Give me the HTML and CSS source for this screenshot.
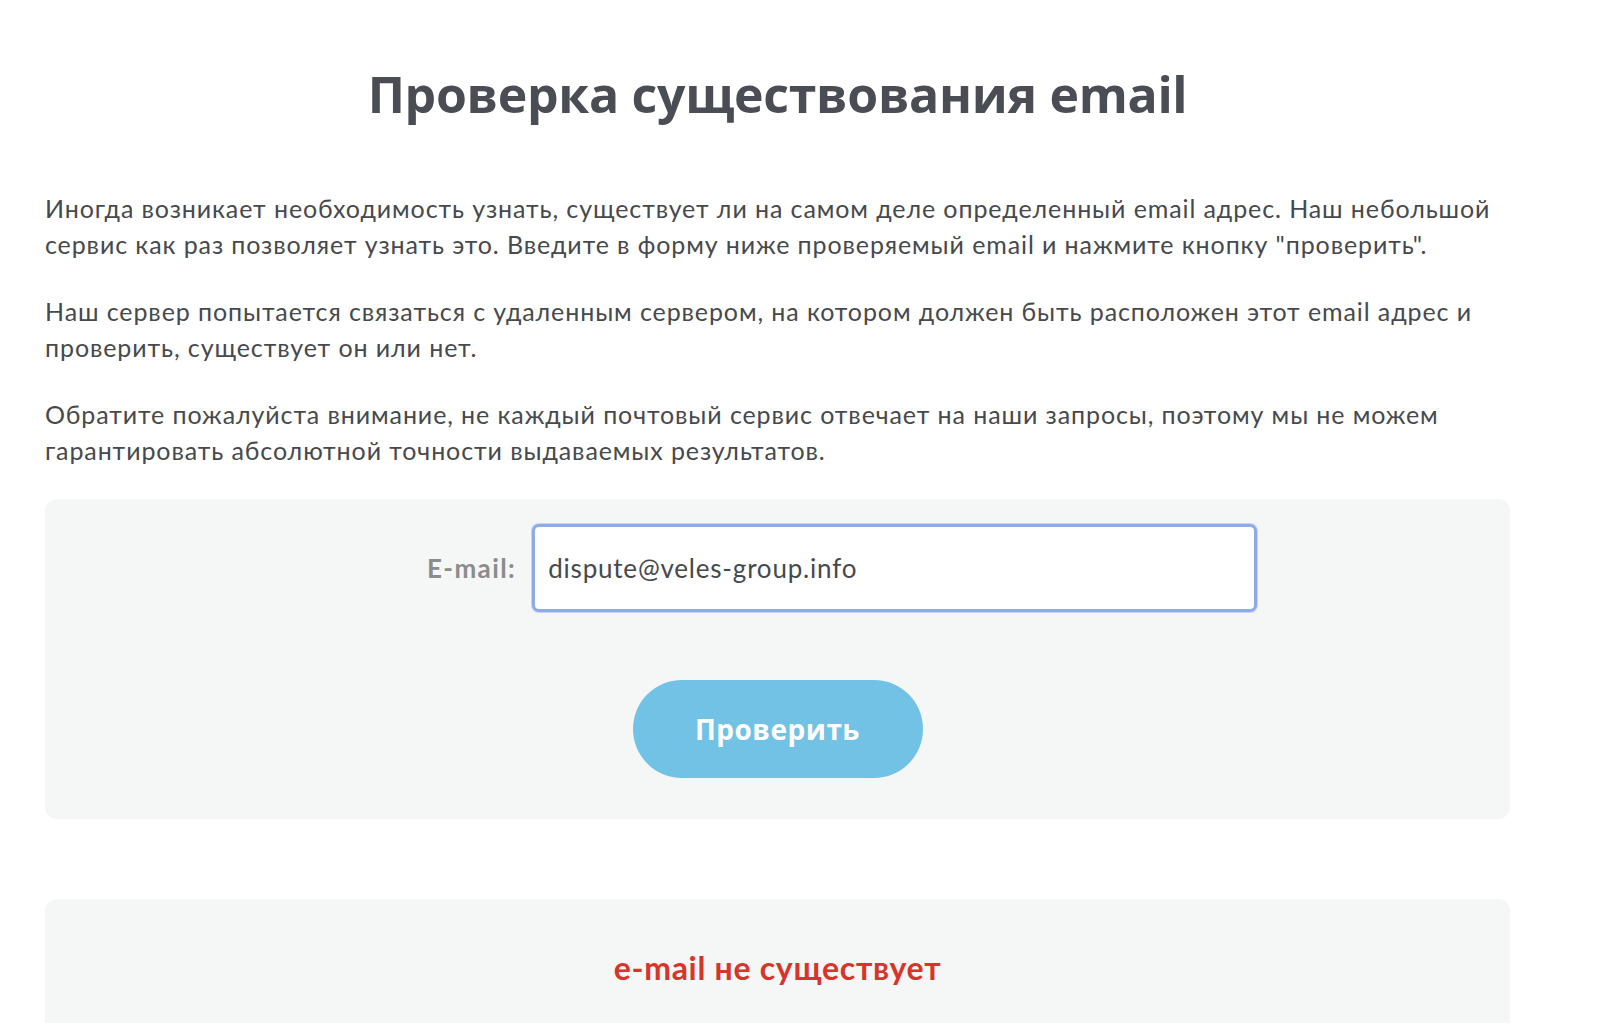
FILE: index.html
```html
<!DOCTYPE html>
<html lang="ru">
<head>
    <meta charset="UTF-8">
    <meta name="viewport" content="width=device-width, initial-scale=1.0">
    <title>Проверка существования email</title>
    <link rel="stylesheet" href="styles.css">
</head>
<body>
    <div class="page">
        <h1>Проверка существования email</h1>

        <p>Иногда возникает необходимость узнать, существует ли на самом деле определенный email адрес. Наш небольшой сервис как раз позволяет узнать это. Введите в форму ниже проверяемый email и нажмите кнопку "проверить".</p>
        <p>Наш сервер попытается связаться с удаленным сервером, на котором должен быть расположен этот email адрес и проверить, существует он или нет.</p>
        <p>Обратите пожалуйста внимание, не каждый почтовый сервис отвечает на наши запросы, поэтому мы не можем гарантировать абсолютной точности выдаваемых результатов.</p>

        <!-- Check form -->
        <form class="check-box" onsubmit="return false;">
            <div class="field-row">
                <label for="email">E-mail:</label>
                <input type="text" id="email" value="dispute@veles-group.info">
            </div>
            <button type="submit">Проверить</button>
        </form>

        <!-- Result -->
        <div class="result-box">
            <span class="result-bad">e-mail не существует</span>
        </div>
    </div>
</body>
</html>
```

FILE: styles.css
```css
:root {
    --text: #46494d;
    --title: #4a4e54;
    --box: #f5f6f6;
    --label: #8c8c8c;
    --focus: #8eaae8;
    --button: #72c2e6;
    --error: #d9342b;
}

* {
    margin: 0;
    padding: 0;
    box-sizing: border-box;
}

body {
    font-family: 'Lato', 'Open Sans', sans-serif;
    color: var(--text);
    background: #fff;
    overflow: hidden;
}

.page {
    width: 1465px;
    margin-left: 45px;
    padding-top: 62px;
}

h1 {
    font-family: 'Open Sans', 'DejaVu Sans', sans-serif;
    font-weight: 700;
    font-size: 50px;
    line-height: 64px;
    letter-spacing: -0.3px;
    color: var(--title);
    text-align: center;
    margin-bottom: 64px;
}

p {
    font-size: 25px;
    line-height: 36px;
    letter-spacing: 0.9px;
    margin-bottom: 31px;
}

.check-box {
    margin-top: 4px;
    background: var(--box);
    border-radius: 12px;
    height: 320px;
    padding-top: 25px;
    display: flex;
    flex-direction: column;
    align-items: center;
}

.field-row {
    align-self: flex-start;
    margin-left: 382px;
    display: flex;
    align-items: center;
    gap: 16px;
}

.field-row label {
    font-size: 26px;
    font-weight: 700;
    letter-spacing: 1.4px;
    color: var(--label);
}

.field-row input {
    width: 725px;
    height: 88px;
    border: 3px solid var(--focus);
    border-radius: 7px;
    box-shadow: 0 0 0 1px rgba(142, 170, 232, 0.45);
    padding: 0 13px;
    font-family: inherit;
    font-size: 26px;
    letter-spacing: 0.8px;
    color: var(--text);
    outline: none;
    background: #fff;
}

.check-box button {
    margin-top: 68px;
    width: 290px;
    height: 98px;
    border: none;
    border-radius: 49px;
    background: var(--button);
    color: #fff;
    font-family: 'Open Sans', 'DejaVu Sans', sans-serif;
    font-weight: 700;
    font-size: 28px;
    letter-spacing: 0.5px;
    cursor: pointer;
}

.result-box {
    margin-top: 80px;
    background: var(--box);
    border-radius: 12px 12px 0 0;
    height: 124px;
    padding-top: 50px;
    text-align: center;
}

.result-bad {
    font-size: 32px;
    line-height: 38px;
    font-weight: 700;
    letter-spacing: 0.7px;
    color: var(--error);
}
```
